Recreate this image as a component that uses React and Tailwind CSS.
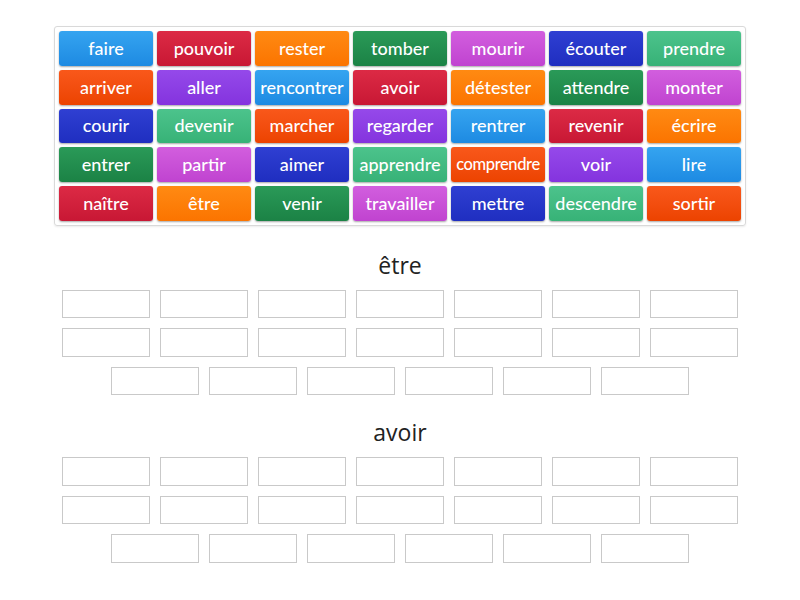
import React from "react";

const COLORS = [
  "from-[#35a4f0] to-[#1d8ae2]", // blue
  "from-[#dc2a45] to-[#c81734]", // crimson
  "from-[#ff8a12] to-[#fb7400]", // orange
  "from-[#2a9a58] to-[#1b8245]", // dark green
  "from-[#d25ede] to-[#c043d0]", // magenta
  "from-[#2f3fd2] to-[#1f2ec0]", // navy
  "from-[#4cc38c] to-[#37b277]", // mint
  "from-[#f9581a] to-[#ec4300]", // red-orange
  "from-[#9549ea] to-[#8433de]", // purple
];

const WORDS = [
  "faire", "pouvoir", "rester", "tomber", "mourir", "écouter", "prendre",
  "arriver", "aller", "rencontrer", "avoir", "détester", "attendre", "monter",
  "courir", "devenir", "marcher", "regarder", "rentrer", "revenir", "écrire",
  "entrer", "partir", "aimer", "apprendre", "comprendre", "voir", "lire",
  "naître", "être", "venir", "travailler", "mettre", "descendre", "sortir",
];

function Word({ w, i }) {
  const small = w === "comprendre";
  return (
    <div
      className={`bg-linear-to-b ${COLORS[i % 9]} h-[34.75px] rounded-[3px] flex items-center justify-center text-white font-medium whitespace-nowrap shadow-[0_1px_2px_rgba(0,0,0,0.35)] ${small ? "text-[16.5px] tracking-[-0.4px]" : "text-[18px]"}`}
      style={{ fontFamily: "Lato, 'Noto Sans', sans-serif" }}
    >
      {w}
    </div>
  );
}

function Group({ title, mt }) {
  return (
    <div className={mt}>
      <div
        className="text-center text-[23px] leading-[28px] text-[#222]"
        style={{ fontFamily: "'Open Sans', 'Noto Sans', sans-serif" }}
      >
        {title}
      </div>
      <div className="mt-[11px] mx-auto w-[686px] flex flex-wrap justify-center gap-x-[10px] gap-y-[10px]">
        {Array.from({ length: 20 }).map((_, i) => (
          <div key={i} className="w-[88px] h-[28.5px] border border-[#c9c9c9] bg-white" />
        ))}
      </div>
    </div>
  );
}

export default function App() {
  return (
    <div className="w-[800px] h-[600px] bg-white overflow-hidden">
      <div className="pt-[26px]">
        <div className="mx-auto w-[692px] border border-[#d9d9d9] rounded-[3px] p-[4px] shadow-[0_1px_2px_rgba(0,0,0,0.08)]">
          <div className="grid grid-cols-7 gap-[4px]">
            {WORDS.map((w, i) => (
              <Word key={i} w={w} i={i} />
            ))}
          </div>
        </div>
      </div>
      <Group title="être" mt="mt-[25px]" />
      <Group title="avoir" mt="mt-[23px]" />
    </div>
  );
}
